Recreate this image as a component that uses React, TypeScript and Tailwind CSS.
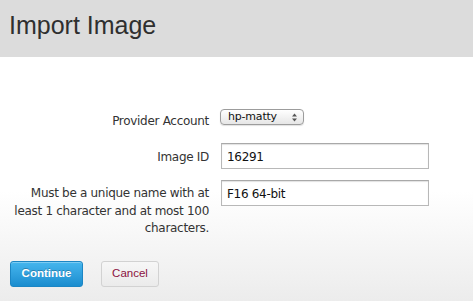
import React from "react";

const body = { fontFamily: '"DejaVu Sans", Verdana, sans-serif' };
const helv = { fontFamily: '"Liberation Sans", Arial, sans-serif' };

export default function App() {
  return (
    <div className="w-full h-[301px] flex flex-col overflow-hidden" style={body}>
      <div className="h-[57px] bg-[#dcdcdc] pl-[9px] pt-[10px] shrink-0">
        <h1 className="text-[25px] leading-[30px] text-[#2f2f2f]" style={helv}>
          Import Image
        </h1>
      </div>
      <div className="flex-1 bg-gradient-to-b from-white from-[55%] to-[#ececec] pt-[52px] text-[12px] tracking-[-0.3px] text-[#333]">
        <div className="grid grid-cols-[209px_208px] gap-x-[12px]">
          <div className="text-right pt-[4px] leading-[16px]">Provider Account</div>
          <div>
            <div className="ml-[-1px] w-[84px] h-[16px] rounded-[4px] border border-[#9c9c9c] bg-gradient-to-b from-white to-[#e6e6e6] shadow-[0_1px_1px_rgba(0,0,0,0.12)] flex items-center justify-between pl-[7px] pr-[6px] text-[11px] leading-[14px] tracking-[-0.2px] text-[#111]">
              <span>hp-matty</span>
              <svg width="5" height="9" viewBox="0 0 5 9" className="text-[#555]">
                <path d="M0 3.5 L2.5 0.5 L5 3.5 Z" fill="currentColor" />
                <path d="M0 5.5 L2.5 8.5 L5 5.5 Z" fill="currentColor" />
              </svg>
            </div>
          </div>

          <div className="text-right leading-[26px] pt-[1px] mt-[14px]">Image ID</div>
          <div className="mt-[14px]">
            <div className="h-[26px] w-[208px] border border-[#b8b8b8] border-t-[#a9a9a9] shadow-[inset_0_1px_1px_rgba(0,0,0,0.12)] bg-white pl-[5px] flex items-center pt-[1px] text-[#111]">
              16291
            </div>
          </div>

          <div className="text-right leading-[17.5px] pt-[5px] mt-[10px]">
            Must be a unique name with at least 1 character and at most 100 characters.
          </div>
          <div className="mt-[10px]">
            <div className="h-[26px] w-[208px] border border-[#b8b8b8] border-t-[#a9a9a9] shadow-[inset_0_1px_1px_rgba(0,0,0,0.12)] bg-white pl-[5px] flex items-center pt-[1px] text-[#111]">
              F16 64-bit
            </div>
          </div>
        </div>

        <div className="flex gap-[18px] pl-[10px] mt-[23px]" style={helv}>
          <button className="w-[73px] h-[26px] rounded-[3px] border border-[#1c86c4] bg-gradient-to-b from-[#45b6ee] to-[#1a8dcf] text-white font-bold text-[11.5px] tracking-normal [text-shadow:0_-1px_0_rgba(0,0,0,0.25)] shadow-[inset_0_1px_0_rgba(255,255,255,0.3)]">
            Continue
          </button>
          <button className="w-[58px] h-[26px] rounded-[3px] border border-[#d2d2d2] bg-gradient-to-b from-[#f7f7f7] to-[#ebebeb] text-[#8b1040] text-[11.5px] tracking-normal">
            Cancel
          </button>
        </div>
      </div>
    </div>
  );
}
